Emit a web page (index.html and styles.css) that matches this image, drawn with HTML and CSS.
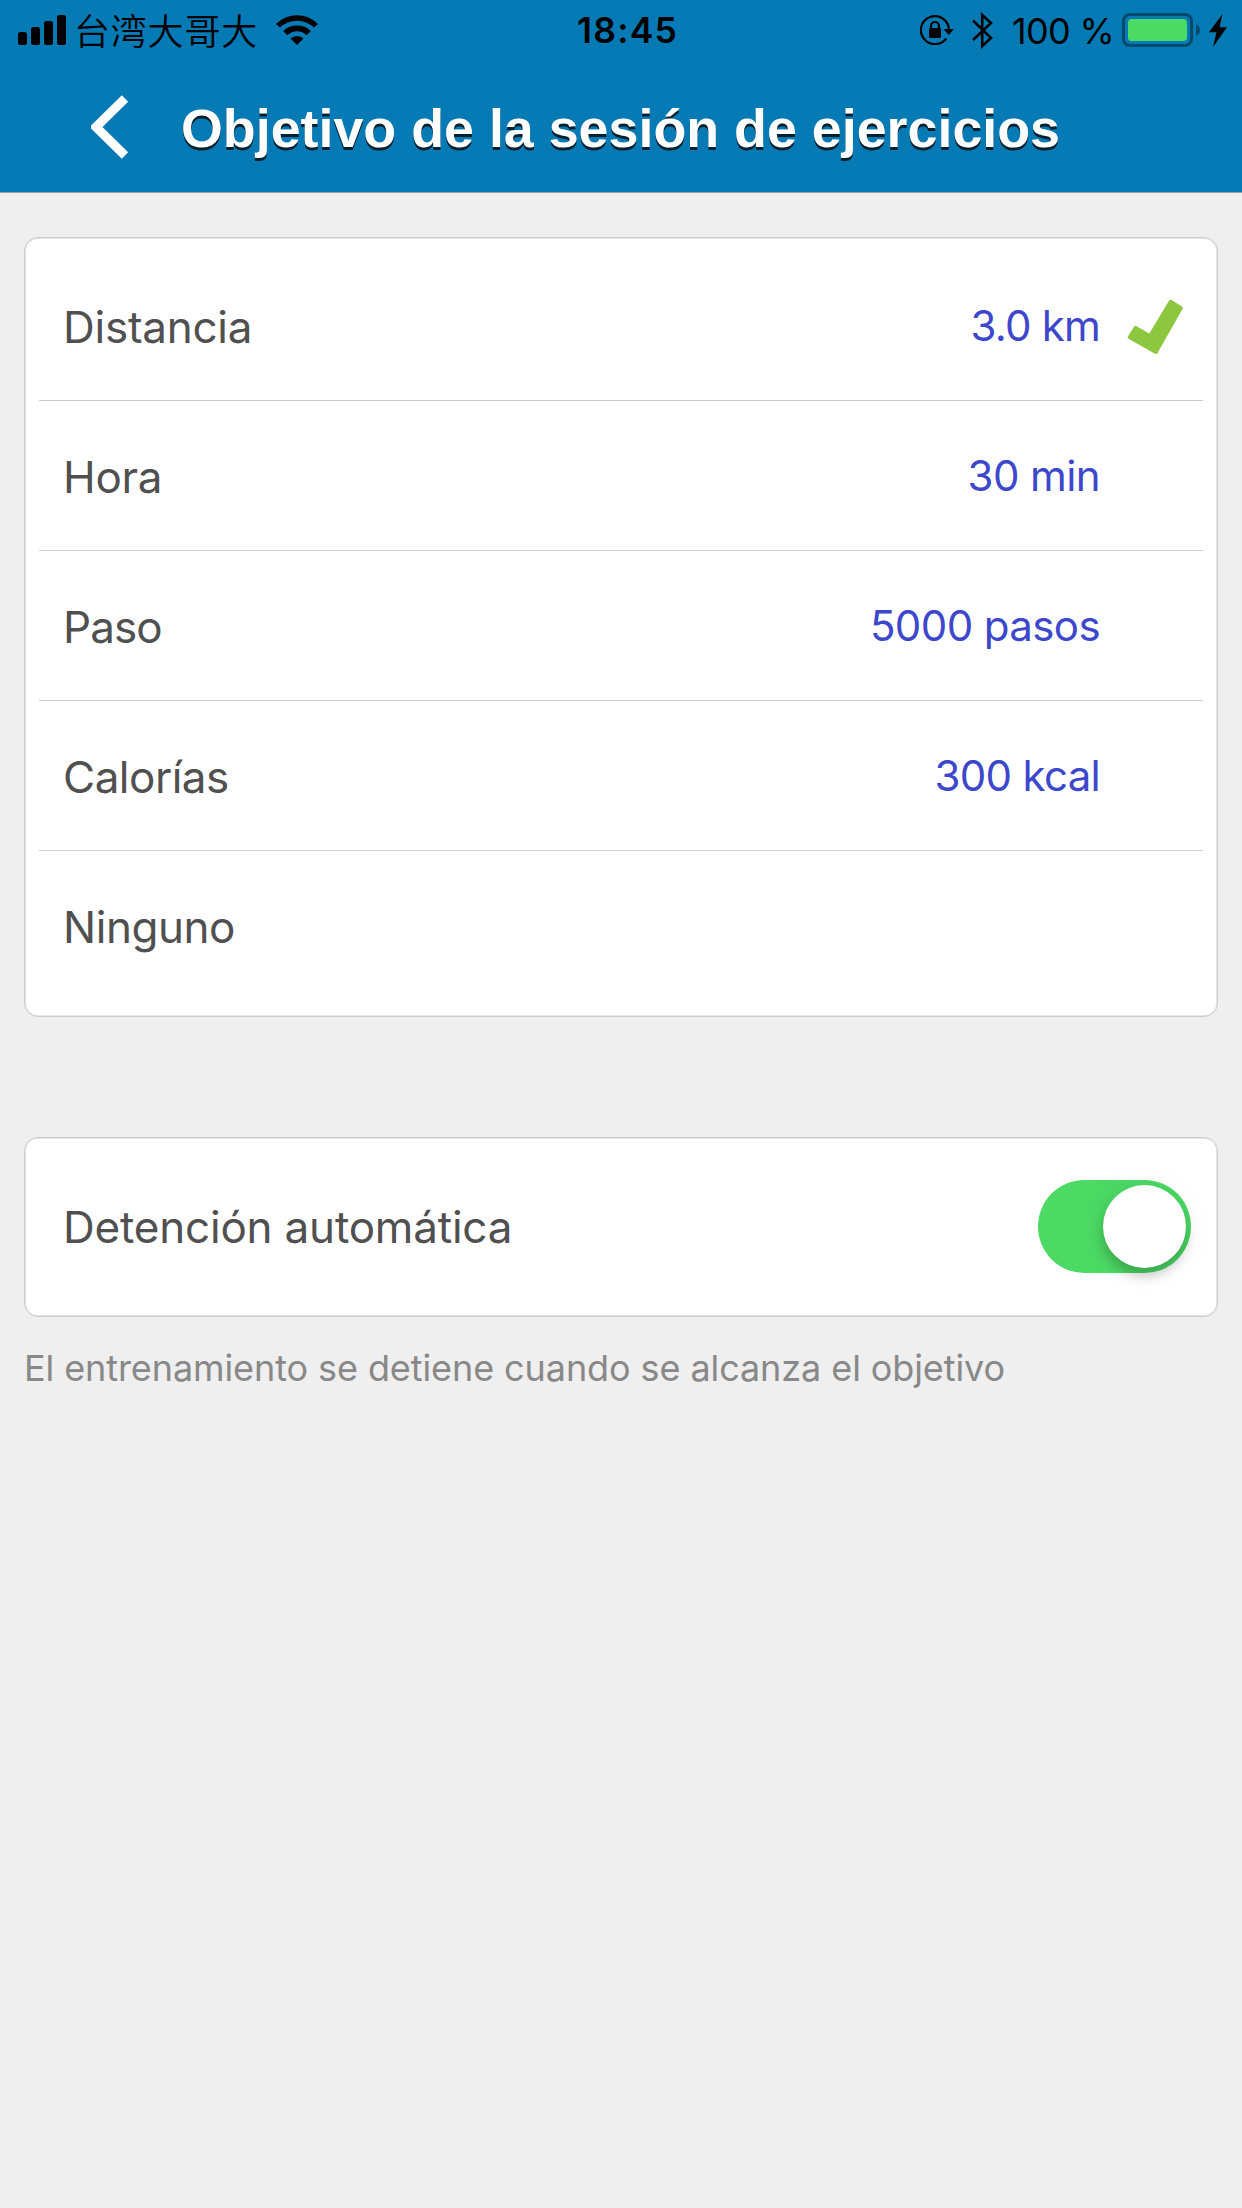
FILE: index.html
```html
<!DOCTYPE html>
<html lang="es">
<head>
    <meta charset="UTF-8">
    <meta name="viewport" content="width=device-width, initial-scale=1.0">
    <title>Objetivo de la sesión de ejercicios</title>
    <link rel="stylesheet" href="styles.css">
</head>
<body>
    <header class="header">
        <div class="status-bar">
            <div class="status-left">
                <svg class="signal" width="48" height="30" viewBox="0 0 48 30">
                    <rect x="0" y="17" width="9" height="13" rx="2.5"/>
                    <rect x="13" y="12" width="9" height="18" rx="2.5"/>
                    <rect x="26" y="6" width="9" height="24" rx="2.5"/>
                    <rect x="39" y="0" width="9" height="30" rx="2.5"/>
                </svg>
                <span class="carrier">台湾大哥大</span>
                <svg class="wifi" width="42" height="30" viewBox="0 0 42 30">
                    <path d="M0 8.9A30 30 0 0 1 42 8.9L38 12.6A24.5 24.5 0 0 0 4 12.6Z"/>
                    <path d="M7.2 16A19.8 19.8 0 0 1 34.8 16L30.6 20.2A13.7 13.7 0 0 0 11.4 20.2Z"/>
                    <path d="M14.5 23.5A9.5 9.5 0 0 1 27.5 23.5L21 30Z"/>
                </svg>
            </div>
            <span class="time">18:45</span>
            <div class="status-right">
                <svg class="lock" width="34" height="30" viewBox="0 0 34 30">
                    <path class="line" d="M26.3 23.3A14 14 0 1 1 28.9 14.5"/>
                    <path d="M23.5 14H34L28.8 20Z"/>
                    <rect x="9" y="13" width="12" height="10" rx="1.5"/>
                    <path class="line" d="M11 14V11A4 4 0 0 1 19 11V14"/>
                </svg>
                <svg class="bluetooth" width="21" height="37" viewBox="0 0 21 37">
                    <path d="M1 8.5L19 26L10.2 34V3L19 11L1 28"/>
                </svg>
                <span class="percent">100 %</span>
                <svg class="battery" width="78" height="34" viewBox="0 0 78 34">
                    <rect class="battery-case" x="1.5" y="1.5" width="68" height="31" rx="6.5"/>
                    <rect class="battery-level" x="6" y="6" width="59" height="22" rx="3.5"/>
                    <path class="battery-tip" d="M74 11Q78 13 78 17T74 23Z"/>
                </svg>
                <svg class="bolt" width="18" height="33" viewBox="0 0 18 33">
                    <path d="M13.5 0L0 18.3H7.5L4 33L18 13.3H10.5Z"/>
                </svg>
            </div>
        </div>
        <div class="nav">
            <svg class="back" width="38" height="64" viewBox="0 0 38 64">
                <path d="M34 3.5L5 32L34 60.5"/>
            </svg>
            <h1>Objetivo de la sesión de ejercicios</h1>
        </div>
    </header>

    <main>
        <ul class="card goals">
            <li>
                <span class="label distancia">Distancia</span>
                <span class="value km">3.0 km</span>
                <svg class="check" width="58" height="58" viewBox="0 0 58 58">
                    <path d="M42 2.7Q43 1.3 44.5 2L55 8.6Q56.3 9.5 55.5 11L30.5 55Q29.5 56.6 28 55.7L1.5 40.7Q0 39.8 1 38.3L7 28.7Q8 27.2 9.5 28.2L22.3 35.5Z"/>
                </svg>
            </li>
            <li>
                <span class="label hora">Hora</span>
                <span class="value min">30 min</span>
            </li>
            <li>
                <span class="label paso">Paso</span>
                <span class="value pasos">5000 pasos</span>
            </li>
            <li>
                <span class="label calorias">Calorías</span>
                <span class="value kcal">300 kcal</span>
            </li>
            <li>
                <span class="label ninguno">Ninguno</span>
            </li>
        </ul>

        <div class="card auto-stop">
            <span class="label detencion">Detención automática</span>
            <span class="toggle"><span class="knob"></span></span>
        </div>
        <p class="hint">El entrenamiento se detiene cuando se alcanza el objetivo</p>
    </main>
</body>
</html>
```
FILE: styles.css
```css
* {
    box-sizing: border-box;
}
body {
    background-color: #efefef;
    color: #505050;
    font-family: Inter, "Liberation Sans", Arial, sans-serif;
    margin: 0;
    min-height: 2208px;
}
h1, ul, p {
    margin: 0;
    padding: 0;
}
svg {
    display: block;
    flex: none;
}

/* header */
.header {
    background-color: #067ab5;
    height: 193px;
    border-bottom: 1px solid #989da0;
}
.status-bar {
    color: #000000;
    display: grid;
    grid-template-columns: 577px 343px 1fr;
    grid-template-rows: 60px;
}
.status-left,
.status-right {
    display: flex;
    align-items: center;
}
.signal {
    margin-left: 18px;
}
.carrier {
    font-family: "Noto Sans CJK SC", sans-serif;
    font-size: 36px;
    font-weight: 350;
    letter-spacing: 0.8px;
    line-height: 58px;
    width: 202px;
    margin-left: 8px;
    padding-bottom: 2px;
    white-space: nowrap;
}
.time {
    font-size: 35.5px;
    font-weight: 600;
    letter-spacing: 1.2px;
    line-height: 62px;
}
.lock .line {
    fill: none;
    stroke: #000000;
    stroke-width: 2.2;
}
.bluetooth {
    margin-left: 18px;
}
.bluetooth path {
    fill: none;
    stroke: #000000;
    stroke-width: 2.6;
}
.percent {
    font-size: 36px;
    letter-spacing: -0.7px;
    line-height: 58px;
    width: 110px;
    margin-left: 19px;
    padding-top: 2px;
    white-space: nowrap;
}
.battery-case {
    fill: none;
    stroke: #044a6d;
    stroke-width: 3;
}
.battery-level {
    fill: #4cd964;
}
.battery-tip {
    fill: #044a6d;
}
.bolt {
    margin-left: 9px;
}
.nav {
    display: flex;
    align-items: center;
    height: 132px;
    padding-top: 2px;
    padding-left: 91px;
}
.back path {
    fill: none;
    stroke: #ffffff;
    stroke-width: 9;
}
h1 {
    color: #ffffff;
    font-family: "Liberation Sans", Arial, sans-serif;
    font-size: 53.8px;
    font-weight: bold;
    line-height: 60px;
    margin-left: 52px;
    padding-top: 2px;
    text-shadow: 0 3px 0 #03202f;
    white-space: nowrap;
}

/* cards */
main {
    padding: 44px 24px 0;
}
.card {
    background-color: #ffffff;
    border: 1px solid #cccccc;
    border-radius: 14px;
    box-shadow: inset 0 0 0 1px #e6e6e6;
}
.goals {
    height: 780px;
    padding: 13px 14px;
    list-style: none;
}
.goals li {
    display: flex;
    align-items: center;
    height: 150px;
    padding: 0 103px 0 24px;
    border-bottom: 1px solid #cccccc;
    position: relative;
}
.goals li:last-child {
    border-bottom: none;
    padding-bottom: 2px;
}
.label {
    font-size: 44px;
    line-height: 60px;
    padding-top: 3px;
    white-space: nowrap;
}
.distancia {
    letter-spacing: -0.25px;
}
.hora {
    letter-spacing: -0.3px;
}
.paso {
    letter-spacing: -0.9px;
}
.calorias {
    letter-spacing: -0.5px;
}
.ninguno {
    letter-spacing: -0.45px;
}
.detencion {
    letter-spacing: -0.2px;
    padding-top: 1px;
}
.value {
    color: #3d47cc;
    font-size: 42px;
    line-height: 60px;
    margin-left: auto;
    padding-top: 1px;
    white-space: nowrap;
}
.km {
    letter-spacing: -0.8px;
}
.min {
    letter-spacing: -0.6px;
}
.pasos {
    letter-spacing: -0.6px;
}
.kcal {
    letter-spacing: -0.7px;
}
/* sits in the free space right of the values */
.check {
    position: absolute;
    right: 18px;
    top: 47px;
    fill: #8dc63f;
}
.auto-stop {
    display: flex;
    align-items: center;
    justify-content: space-between;
    height: 180px;
    margin-top: 120px;
    padding: 0 26px 2px 38px;
}
.toggle {
    background-color: #4cd964;
    border-radius: 47px;
    display: flex;
    align-items: center;
    justify-content: flex-end;
    width: 153px;
    height: 93px;
    padding-right: 5px;
}
.knob {
    background-color: #ffffff;
    border-radius: 50%;
    box-shadow: 0 8px 12px rgba(0, 0, 0, 0.2), 0 2px 34px rgba(0, 0, 0, 0.06);
    width: 83px;
    height: 83px;
}
.hint {
    color: #888888;
    font-size: 36px;
    letter-spacing: -0.09px;
    line-height: 50px;
    margin-top: 26px;
    white-space: nowrap;
}
```
